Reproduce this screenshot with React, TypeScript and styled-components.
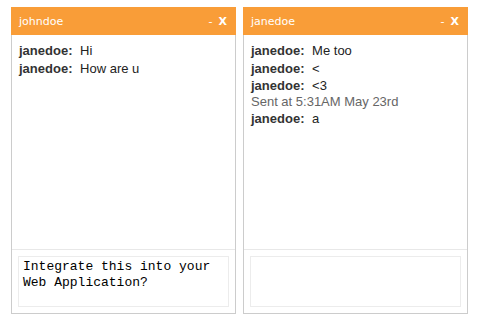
import { createGlobalStyle } from 'styled-components'
import styled from 'styled-components'

type Line = { author?: string; text: string }

type ChatWindowProps = {
  title: string
  lines: Line[]
  draft?: string
}

const GlobalStyle = createGlobalStyle`
  html, body {
    margin: 0;
    padding: 0;
    background: #ffffff;
  }
  body {
    font-family: "Liberation Sans", Arial, sans-serif;
  }
`

function ChatWindow({ title, lines, draft = '' }: ChatWindowProps) {
  return (
    <Window>
      <Header>
        <Title>{title}</Title>
        <Controls>
          <Minimize>-</Minimize>
          <Close>X</Close>
        </Controls>
      </Header>
      <Body>
        <Messages>
          {lines.map((line, i) =>
            line.author ? (
              <Message key={i}>
                <Author>{line.author}:</Author> {line.text}
              </Message>
            ) : (
              <Notice key={i}>{line.text}</Notice>
            )
          )}
        </Messages>
        <InputArea>
          <Input defaultValue={draft} rows={2} />
        </InputArea>
      </Body>
    </Window>
  )
}

export default function App() {
  return (
    <>
      <GlobalStyle />
      <Page>
        <ChatWindow
          title="johndoe"
          lines={[
            { author: 'janedoe', text: 'Hi' },
            { author: 'janedoe', text: 'How are u' }
          ]}
          draft="Integrate this into your Web Application?"
        />
        <ChatWindow
          title="janedoe"
          lines={[
            { author: 'janedoe', text: 'Me too' },
            { author: 'janedoe', text: '<' },
            { author: 'janedoe', text: '<3' },
            { text: 'Sent at 5:31AM May 23rd' },
            { author: 'janedoe', text: 'a' }
          ]}
        />
      </Page>
    </>
  )
}

const Page = styled.div`
  display: flex;
  gap: 7px;
  padding: 7px 0 0 11px;
`

const Window = styled.div`
  display: flex;
  flex-direction: column;
  width: 225px;
  height: 307px;
`

const Header = styled.header`
  display: flex;
  align-items: center;
  justify-content: space-between;
  height: 28px;
  padding: 0 9px 0 8px;
  background: #f99d38;
  color: #ffffff;
  flex-shrink: 0;
`

const Title = styled.span`
  font-family: "DejaVu Sans", Verdana, sans-serif;
  font-size: 11px;
`

const Controls = styled.div`
  display: flex;
  align-items: center;
  gap: 6px;
  font-family: "DejaVu Sans", Verdana, sans-serif;
  font-size: 11px;
`

const Minimize = styled.span`
  font-weight: normal;
`

const Close = styled.span`
  font-weight: bold;
`

const Body = styled.div`
  display: flex;
  flex-direction: column;
  flex: 1;
  border: 1px solid #cccccc;
  border-top: none;
  min-height: 0;
`

const Messages = styled.div`
  flex: 1;
  padding: 7px 7px;
  font-size: 13px;
  line-height: 17.6px;
  color: #222222;
`

const Message = styled.div`
  white-space: nowrap;
`

const Author = styled.b`
  color: #333333;
  margin-right: 4px;
`

const Notice = styled.div`
  color: #666666;
  line-height: 15px;
  margin: -1px 0 1px;
`

const InputArea = styled.div`
  border-top: 1px solid #e8e8e8;
  padding: 6px;
  flex-shrink: 0;
`

const Input = styled.textarea`
  display: block;
  box-sizing: border-box;
  width: 100%;
  height: 51px;
  margin: 0;
  padding: 2px 4px;
  border: 1px solid #ececec;
  outline: none;
  resize: none;
  overflow: hidden;
  font-family: "Liberation Mono", "Courier New", monospace;
  font-size: 13px;
  line-height: 16px;
  color: #000000;
  background: #ffffff;
`
